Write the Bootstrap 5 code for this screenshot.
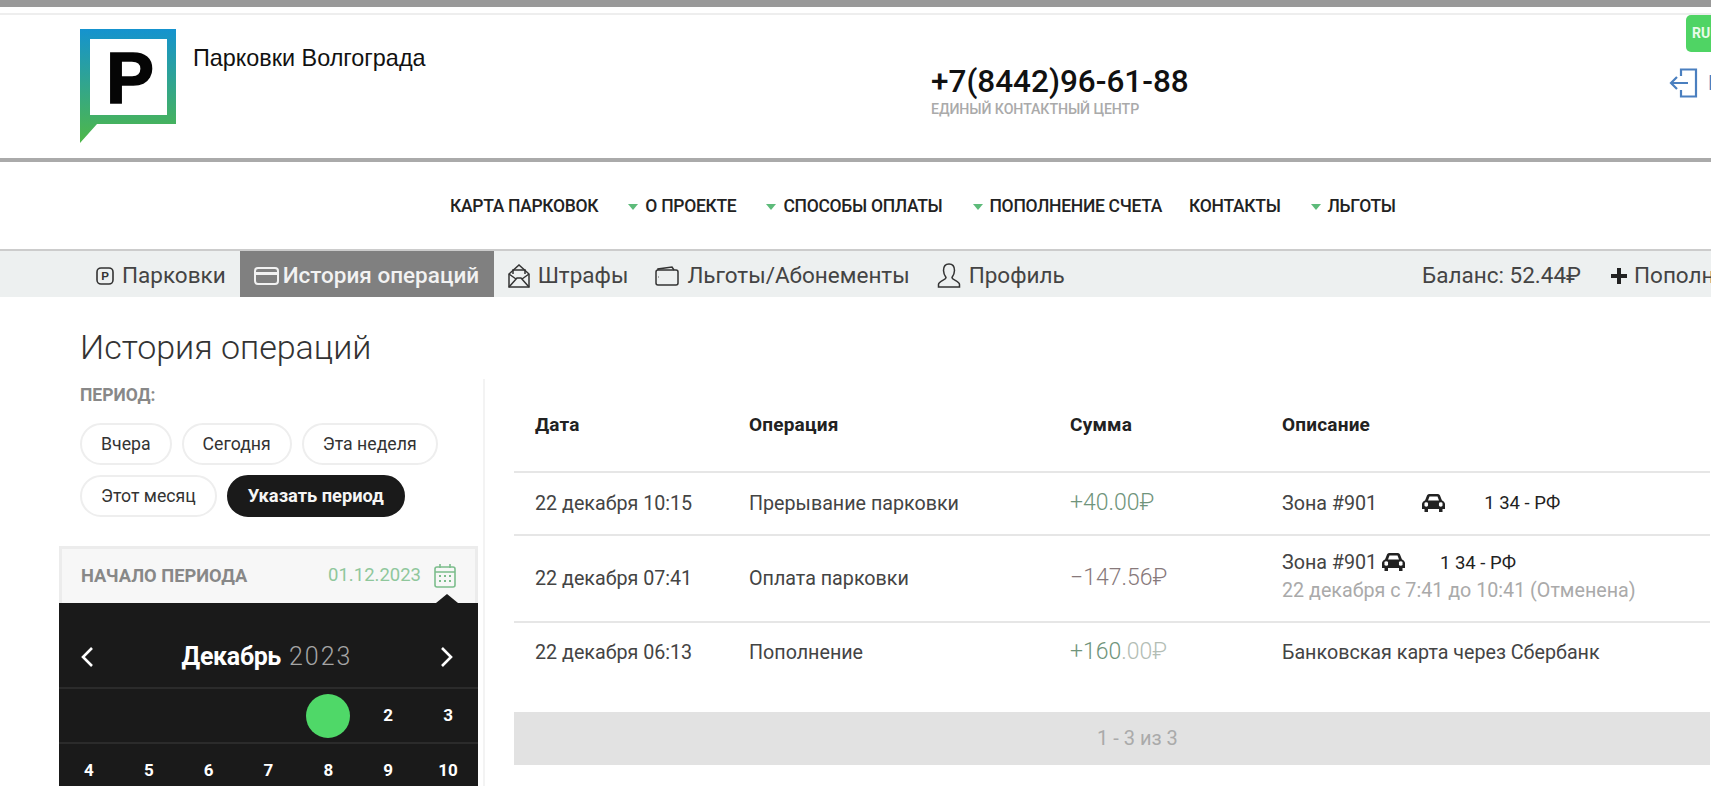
<!doctype html>
<html lang="ru">

<head>
    <meta charset="UTF-8" />
    <meta name="viewport" content="width=device-width, initial-scale=1" />
    <title>Парковки Волгограда - История операций</title>
    <link href="https://cdn.jsdelivr.net/npm/bootstrap@5.3.3/dist/css/bootstrap.min.css" rel="stylesheet">
    <style>
        html, body { height: 100%; overflow: hidden; }
        body { font-family: Roboto, "Liberation Sans", sans-serif; color: #333; background: #fff; }

        .top-strip { height: 7px; background: #999; }
        .top-gap { height: 8px; border-bottom: 2px solid #eee; }
        .site-head { height: 147px; border-bottom: 4px solid #aaa; position: relative; overflow: hidden; }
        .logo-box { margin: 14px 0 0 80px; width: 96px; height: 114px; flex: none; }
        .logo-title { margin: 31px 0 0 17px; width: 738px; flex: none; font-size: 23.400px; font-weight: 400; color: #111; line-height: 24px; font-family: "Liberation Sans", sans-serif; }
        .phone-box { margin-top: 49px; }
        .phone-num { font-size: 31.500px; font-weight: 500; line-height: 36px; color: #111; }
        .phone-sub { font-size: 14.200px; font-weight: 500; line-height: 18px; color: #aaa; letter-spacing: -.1px; }
        .lang-tag { position: absolute; left: 1686px; top: 0; width: 60px; height: 37px; background: #4fd464; border-radius: 5px; color: #e8fbe9; font-weight: 700; font-size: 14px; line-height: 37px; padding-left: 6px; }
        .door-ico { position: absolute; left: 1668px; top: 53px; }
        .door-txt { position: absolute; left: 1708px; top: 53px; font-size: 20px; line-height: 30px; color: #4a7fbf; white-space: nowrap; }

        .main-menu { height: 89px; padding: 1px 0 0 450px; font-size: 17.500px; font-weight: 500; color: #222; border-bottom: 2px solid #ccc; }
        .main-menu span.mi { white-space: nowrap; letter-spacing: -.3px; }
        .menu-gap { margin-left: 30px; }
        .menu-tight { margin-left: 27px; }
        .menu-caret { display: inline-block; width: 0; height: 0; border-left: 5px solid transparent; border-right: 5px solid transparent; border-top: 6px solid #5dbb7a; margin-right: 7px; vertical-align: 2px; }

        .cab-bar { height: 46px; background: #edf0f0; font-size: 22.500px; color: #444; overflow: hidden; white-space: nowrap; }
        .cab-item { display: flex; align-items: center; gap: 8px; height: 100%; flex: none; padding-top: 3px; }
        .cab-item svg { flex: none; }
        .cab-active { background: #808080; color: #f2f2f2; font-weight: 500; width: 254px; padding-left: 14px; gap: 4px; margin: 0 14px 0 14px; }
        .cab-first { margin-left: 96px; }
        .cab-next { margin-left: 27px; }
        .cab-last { width: 101px; overflow: hidden; gap: 6px; }
        .cab-balance { margin-right: 2px; }

        .page-title { height: 82px; margin: 0; padding: 32px 0 0 80px; font-size: 34px; font-weight: 300; line-height: 36px; color: #333; }

        .side-col { width: 485px; flex: none; border-right: 2px solid #f3f3f3; }
        .period-label { margin: 5px 0 17px 80px; font-size: 17.500px; font-weight: 700; line-height: 22px; color: #888; }
        .pill-wrap { margin-left: 80px; width: 400px; row-gap: 10px; column-gap: 10px; }
        .pill-btn { height: 42px; padding: 0 19px; border: 2px solid #eee; border-radius: 21px; background: #fff; font-size: 17.700px; color: #333; line-height: 38px; }
        .pill-on { background: #1a1a1a; border-color: #1a1a1a; color: #f5f5f5; font-weight: 700; font-size: 18.300px; }
        .range-head { margin: 29px 0 0 59px; width: 419px; height: 57px; background: #f7f7f7; border: 3px solid #ececec; border-bottom: 0; padding: 0 19px; position: relative; }
        .range-name { font-size: 18.300px; font-weight: 700; color: #888; }
        .range-date { font-size: 18.500px; font-weight: 400; color: #8fc79c; margin-right: 13px; }
        .range-tip { position: absolute; left: 374px; bottom: 0; width: 0; height: 0; border-left: 11px solid transparent; border-right: 11px solid transparent; border-bottom: 9px solid #1a1a1a; }
        .cal-box { margin-left: 59px; width: 419px; background: #1a1a1a; color: #fff; }
        .cal-top { height: 86px; border-bottom: 2px solid #2b2b2b; padding: 24px 23px 0 20px; }
        .cal-month { font-size: 25px; font-weight: 700; letter-spacing: -.3px; }
        .cal-year { font-size: 25px; font-weight: 300; color: #a5a5a5; letter-spacing: 2px; margin-left: 8px; }
        .cal-week { display: grid; grid-template-columns: repeat(7, 1fr); height: 55px; border-bottom: 2px solid #2b2b2b; align-items: center; text-align: center; font-size: 17px; font-weight: 700; }
        .cal-today { display: block; width: 44px; height: 44px; margin: 0 auto; border-radius: 50%; background: #4fd868; }

        .oper-col { flex: 1; margin-left: 29px; min-width: 0; overflow: hidden; }
        .oper-table { table-layout: fixed; width: 1196px; margin: 0; }
        .oper-table th, .oper-table td { padding: 0; vertical-align: middle; background: transparent; border: 0; }
        .oper-table th { height: 93px; font-size: 19px; font-weight: 700; letter-spacing: .2px; color: #222; border-bottom: 2px solid #e6e6e6; }
        .oper-table td { font-size: 19.700px; color: #444; border-bottom: 2px solid #e6e6e6; }
        .oper-table tr:last-child td { border-bottom: 0; }
        .col-first { padding-left: 21px !important; }
        .row-a { height: 63px; }
        .row-b { height: 87px; }
        .row-b .desc-cell { padding-bottom: 4px; }
        .row-c { height: 60px; }
        .sum-val { font-size: 23px; font-weight: 300; }
        .sum-plus { color: #6f947b; }
        .sum-minus { color: #87797b; }
        .sum-frac { color: #b3bdb5; }
        .car-ico { vertical-align: -2px; }
        .car-wide { margin-left: 45px; }
        .plate-txt { color: #222; font-size: 18.500px; }
        .plate-wide { margin-left: 39px; }
        .plate-near { margin-left: 30px; }
        .note-line { color: #aaa; line-height: 28px; }
        .desc-line { line-height: 28px; }
        .pager-bar { margin-top: 30px; height: 53px; width: 1196px; background: #e2e2e2; color: #aaa; font-size: 20px; font-weight: 400; padding-left: 583px; line-height: 53px; }
    </style>
</head>

<body>
    <div class="top-strip"></div>
    <div class="top-gap"></div>

    <header class="site-head d-flex align-items-start">
        <svg class="logo-box" viewBox="0 0 96 114">
            <defs>
                <linearGradient id="logoGrad" x1="0" y1="0" x2="0" y2="1">
                    <stop offset="0" stop-color="#1593cf" />
                    <stop offset="1" stop-color="#4fb848" />
                </linearGradient>
            </defs>
            <path d="M0 0H96V95H17L0 114Z" fill="url(#logoGrad)" />
            <rect x="10" y="10" width="77" height="76" fill="#fff" />
            <text x="26" y="74" font-family="Liberation Sans" font-weight="700" font-size="72" fill="#050505" stroke="#050505" stroke-width="1.5">P</text>
        </svg>
        <div class="logo-title">Парковки Волгограда</div>
        <div class="phone-box">
            <div class="phone-num">+7(8442)96-61-88</div>
            <div class="phone-sub">ЕДИНЫЙ КОНТАКТНЫЙ ЦЕНТР</div>
        </div>
        <div class="lang-tag">RU</div>
        <svg class="door-ico" width="30" height="30" viewBox="0 0 30 30" fill="none" stroke="#4a7fbf" stroke-width="2.2">
            <path d="M13 8V1.500H28V28.500H13V22" />
            <path d="M20 15H3M9 9L3 15L9 21" />
        </svg>
        <div class="door-txt">Выход</div>
    </header>

    <nav class="main-menu d-flex align-items-center">
        <span class="mi">КАРТА ПАРКОВОК</span>
        <span class="mi menu-gap"><i class="menu-caret"></i>О ПРОЕКТЕ</span>
        <span class="mi menu-gap"><i class="menu-caret"></i>СПОСОБЫ ОПЛАТЫ</span>
        <span class="mi menu-gap"><i class="menu-caret"></i>ПОПОЛНЕНИЕ СЧЕТА</span>
        <span class="mi menu-tight">КОНТАКТЫ</span>
        <span class="mi menu-gap"><i class="menu-caret"></i>ЛЬГОТЫ</span>
    </nav>

    <div class="cab-bar d-flex align-items-center">
        <div class="cab-item cab-first">
            <svg width="18" height="18" viewBox="0 0 18 18" fill="none" stroke="#333" stroke-width="1.6"><rect x="1" y="1" width="16" height="16" rx="4" /><text x="5.200" y="13.400" font-family="Liberation Sans" font-weight="700" font-size="11.500" fill="#333" stroke="none">P</text></svg>
            Парковки
        </div>
        <div class="cab-item cab-active">
            <svg width="25" height="18" viewBox="0 0 25 18" fill="none" stroke="#f2f2f2" stroke-width="2"><rect x="1" y="1" width="23" height="16" rx="3" /><path d="M1 6.500H24" stroke-width="3" /></svg>
            История операций
        </div>
        <div class="cab-item">
            <svg width="22" height="24" viewBox="0 0 22 24" fill="none" stroke="#333" stroke-width="1.5"><path d="M1 10L11 1L21 10V23H1Z" /><path d="M1 23L9 14H13L21 23M1 10L8 15M21 10L14 15M5 10V6H17V10" /></svg>
            Штрафы
        </div>
        <div class="cab-item cab-next">
            <svg width="24" height="20" viewBox="0 0 24 20" fill="none" stroke="#333" stroke-width="1.5"><rect x="1" y="4" width="22" height="15" rx="2" /><path d="M3 4V3L17 1L19 4" /><path d="M3 11H3.500" /></svg>
            Льготы/Абонементы
        </div>
        <div class="cab-item cab-next">
            <svg width="24" height="25" viewBox="0 0 24 25" fill="none" stroke="#333" stroke-width="1.5"><path d="M12 1C8 1 6.500 4 6.500 7.500C6.500 10.500 8 13 9 14.500C9 17 1.500 18 1.500 21.500V24H22.500V21.500C22.500 18 15 17 15 14.500C16 13 17.500 10.500 17.500 7.500C17.500 4 16 1 12 1Z" /></svg>
            Профиль
        </div>
        <div class="cab-item cab-balance ms-auto">Баланс: 52.44₽</div>
        <div class="cab-item cab-next cab-last">
            <svg width="18" height="18" viewBox="0 0 18 18" fill="#222"><path d="M7 1H11V7H17V11H11V17H7V11H1V7H7Z" /></svg>
            Пополнить счет
        </div>
    </div>

    <h1 class="page-title">История операций</h1>

    <div class="d-flex">
        <aside class="side-col">
            <div class="period-label">ПЕРИОД:</div>
            <div class="pill-wrap d-flex flex-wrap">
                <div class="pill-btn">Вчера</div>
                <div class="pill-btn">Сегодня</div>
                <div class="pill-btn">Эта неделя</div>
                <div class="pill-btn">Этот месяц</div>
                <div class="pill-btn pill-on">Указать период</div>
            </div>
            <div class="range-head d-flex align-items-center">
                <span class="range-name me-auto">НАЧАЛО ПЕРИОДА</span>
                <span class="range-date">01.12.2023</span>
                <svg width="22" height="24" viewBox="0 0 22 24" fill="none" stroke="#7cbd8c" stroke-width="1.6"><rect x="1" y="3" width="20" height="20" rx="2" /><path d="M1 8H21M6 0V4M16 0V4" /><path d="M5 12H7M10 12H12M15 12H17M5 17H7M10 17H12M15 17H17" stroke-width="2" /></svg>
                <i class="range-tip"></i>
            </div>
            <div class="cal-box">
                <div class="cal-top d-flex align-items-center justify-content-between">
                    <svg width="16" height="22" viewBox="0 0 16 22" fill="none" stroke="#fff" stroke-width="2.600"><path d="M13 2L4 11L13 20" /></svg>
                    <div><span class="cal-month">Декабрь</span><span class="cal-year">2023</span></div>
                    <svg width="16" height="22" viewBox="0 0 16 22" fill="none" stroke="#fff" stroke-width="2.600"><path d="M3 2L12 11L3 20" /></svg>
                </div>
                <div class="cal-week">
                    <span></span><span></span><span></span><span></span>
                    <span class="cal-today"></span>
                    <span>2</span><span>3</span>
                </div>
                <div class="cal-week">
                    <span>4</span><span>5</span><span>6</span><span>7</span><span>8</span><span>9</span><span>10</span>
                </div>
            </div>
        </aside>

        <main class="oper-col">
            <table class="table oper-table">
                <colgroup>
                    <col style="width:235px">
                    <col style="width:321px">
                    <col style="width:212px">
                    <col>
                </colgroup>
                <thead>
                    <tr>
                        <th class="col-first">Дата</th>
                        <th>Операция</th>
                        <th>Сумма</th>
                        <th>Описание</th>
                    </tr>
                </thead>
                <tbody>
                    <tr class="row-a">
                        <td class="col-first">22 декабря 10:15</td>
                        <td>Прерывание парковки</td>
                        <td><span class="sum-val sum-plus">+40.00₽</span></td>
                        <td>
                            <div class="d-flex align-items-center">
                                <span>Зона #901</span>
                                <svg class="car-ico car-wide" width="23" height="18" viewBox="0 0 23 18" fill="#222"><path d="M5 1.500C5.500 .5 6.500 0 7.500 0H15.500C16.500 0 17.500 .5 18 1.500L20 6.500C21.500 7 23 8.500 23 10V15H20.500V18H17V15H6V18H2.500V15H0V10C0 8.500 1.500 7 3 6.500ZM6 6.500H17L15.500 2.500H7.500ZM2.500 10.500A1.800 1.800 0 1 0 6 10.500A1.800 1.800 0 1 0 2.500 10.500ZM17 10.500A1.800 1.800 0 1 0 20.500 10.500A1.800 1.800 0 1 0 17 10.500Z" fill-rule="evenodd" /></svg>
                                <span class="plate-txt plate-wide">1 34 - РФ</span>
                            </div>
                        </td>
                    </tr>
                    <tr class="row-b">
                        <td class="col-first">22 декабря 07:41</td>
                        <td>Оплата парковки</td>
                        <td><span class="sum-val sum-minus">−147.56₽</span></td>
                        <td class="desc-cell">
                            <div class="desc-line">Зона #901
                                <svg class="car-ico" width="23" height="18" viewBox="0 0 23 18" fill="#222"><path d="M5 1.500C5.500 .5 6.500 0 7.500 0H15.500C16.500 0 17.500 .5 18 1.500L20 6.500C21.500 7 23 8.500 23 10V15H20.500V18H17V15H6V18H2.500V15H0V10C0 8.500 1.500 7 3 6.500ZM6 6.500H17L15.500 2.500H7.500ZM2.500 10.500A1.800 1.800 0 1 0 6 10.500A1.800 1.800 0 1 0 2.500 10.500ZM17 10.500A1.800 1.800 0 1 0 20.500 10.500A1.800 1.800 0 1 0 17 10.500Z" fill-rule="evenodd" /></svg>
                                <span class="plate-txt plate-near">1 34 - РФ</span>
                            </div>
                            <div class="note-line">22 декабря с 7:41 до 10:41 (Отменена)</div>
                        </td>
                    </tr>
                    <tr class="row-c">
                        <td class="col-first">22 декабря 06:13</td>
                        <td>Пополнение</td>
                        <td><span class="sum-val sum-plus">+160<span class="sum-frac">.00₽</span></span></td>
                        <td>Банковская карта через Сбербанк</td>
                    </tr>
                </tbody>
            </table>
            <div class="pager-bar">1 - 3 из 3</div>
        </main>
    </div>
</body>

</html>
